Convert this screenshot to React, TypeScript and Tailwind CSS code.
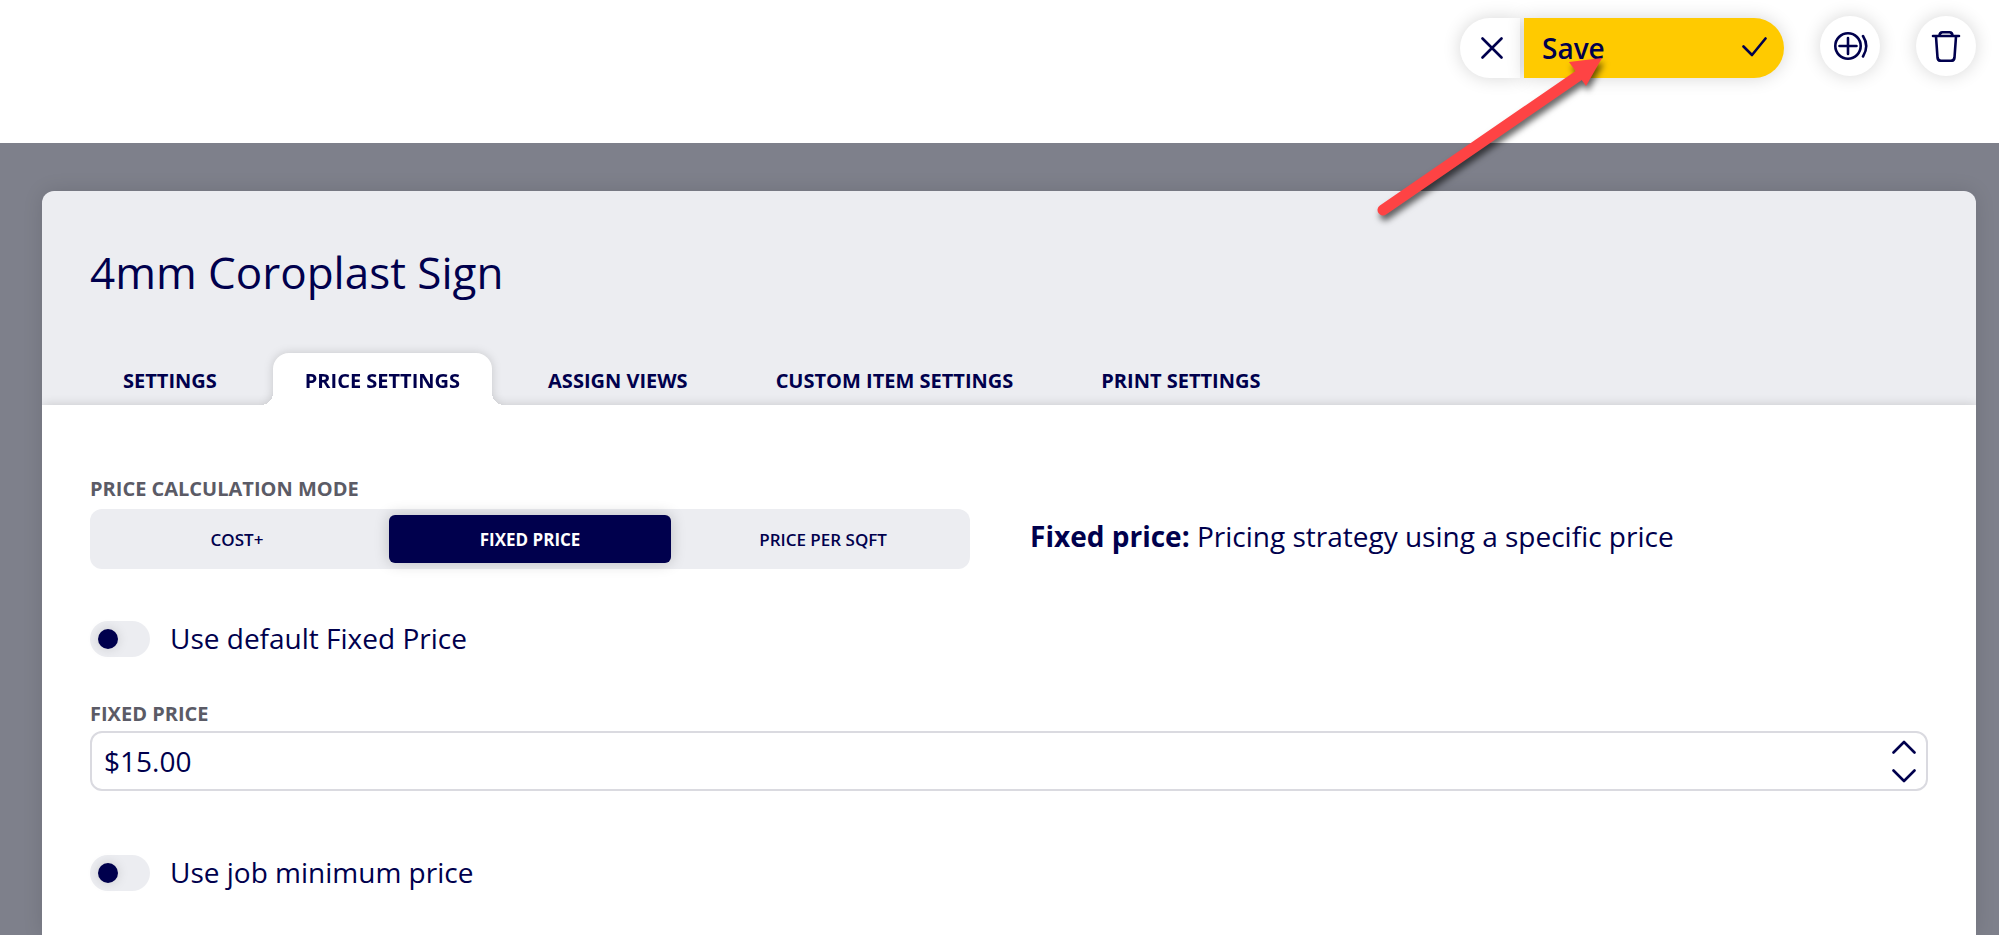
import { useState } from "react";

const tabs = ["Settings", "Price Settings", "Assign Views", "Custom Item Settings", "Print Settings"];
const modes = ["Cost+", "Fixed Price", "Price per sqft"];

function Toggle({ id, label }: { id: string; label: string }) {
    return (
        <div className="flex items-center gap-5">
            <input
                id={id}
                type="checkbox"
                className="h-9 w-[60px] shrink-0 appearance-none rounded-full bg-[#ecedf1] p-2 before:block before:size-5 before:rounded-full before:bg-[#00004d] before:shadow-[0_0_12px_rgba(0,0,0,0.15)] checked:before:ml-6"
            />
            <label htmlFor={id} className="pb-[2px] text-[28px] leading-[34px]">{label}</label>
        </div>
    );
}

function Arrow() {
    return (
        <svg
            className="pointer-events-none absolute top-[40px] right-[379px] z-20 drop-shadow-[2px_5px_3px_rgba(0,0,0,0.6)]"
            width="260"
            height="190"
            viewBox="0 0 260 190"
            aria-hidden="true"
        >
            <path d="M23 170 L218 36" stroke="#fe4344" strokeWidth="11" strokeLinecap="round" />
            <path d="M242 18 L209 22 L226 46 Z" fill="#fe4344" />
        </svg>
    );
}

function Header() {
    return (
        <header className="relative flex h-[143px] items-start justify-end pt-4 pr-[23px]">
            <div className="mt-[2px] flex gap-1">
                <button
                    aria-label="Cancel"
                    className="flex size-[60px] items-center justify-center rounded-l-full rounded-r-[3px] bg-white pl-1 shadow-[0_0_18px_rgba(0,0,0,0.16)]"
                >
                    <svg width="22" height="22" viewBox="0 0 22 22" fill="none" stroke="currentColor" strokeWidth="2.6" strokeLinecap="round">
                        <path d="M1.5 1.5 20.5 20.5M20.5 1.5 1.5 20.5" />
                    </svg>
                </button>
                <button className="flex h-[60px] w-[260px] items-center justify-between rounded-r-full bg-[#ffca00] pr-[17px] pl-[18px] text-[28px] font-semibold shadow-[0_0_18px_rgba(0,0,0,0.16)]">
                    Save
                    <svg width="25" height="30" viewBox="0 0 25 30" fill="none" stroke="currentColor" strokeWidth="2.6" strokeLinecap="round" strokeLinejoin="round">
                        <path d="M1.5 13.5 10 22 23.5 5.5" />
                    </svg>
                </button>
            </div>
            <button
                aria-label="Duplicate"
                className="ml-9 flex size-[60px] items-center justify-center rounded-full bg-white shadow-[0_0_18px_rgba(0,0,0,0.16)]"
            >
                <svg width="36" height="32" viewBox="0 0 36 32" fill="none" stroke="currentColor" strokeWidth="2.6" strokeLinecap="round">
                    <circle cx="16" cy="16" r="12.7" />
                    <path d="M16 8v16M7.5 16h17M31 6Q37.5 16 31 26.5" />
                </svg>
            </button>
            <button
                aria-label="Delete"
                className="ml-9 flex size-[60px] items-center justify-center rounded-full bg-white shadow-[0_0_18px_rgba(0,0,0,0.16)]"
            >
                <svg width="32" height="32" viewBox="0 0 32 32" fill="none" stroke="currentColor" strokeWidth="2.6" strokeLinecap="round" strokeLinejoin="round">
                    <path d="M3 6h26M9.5 6C9.5 3.5 10.5 2.2 12.5 2.2h7c2 0 3 1.3 3 3.8M6 6.5l1.5 21c.2 2 1.5 3.3 3.5 3.3h10c2 0 3.3-1.3 3.5-3.3L26 6.5" />
                </svg>
            </button>
            <Arrow />
        </header>
    );
}

export default function App() {
    const [tab, setTab] = useState("Price Settings");
    const [mode, setMode] = useState("Fixed Price");
    const [price, setPrice] = useState("$15.00");

    return (
        <div className="flex h-screen flex-col overflow-hidden bg-white font-['Open_Sans',sans-serif] text-[#00004d]">
            <Header />
            <main className="flex min-h-0 flex-1 flex-col bg-[#7e808b] pt-12 pr-[23px] pl-[42px]">
                <section className="flex flex-1 flex-col rounded-t-xl bg-[#ecedf1] shadow-[0_0_20px_rgba(0,0,0,0.12)]">
                    <h1 className="px-12 pt-12 text-[44px] leading-[66px]">4mm Coroplast Sign</h1>
                    <div role="tablist" className="mt-12 flex gap-6 px-[49px]">
                        {tabs.map((name) => (
                            <button
                                key={name}
                                role="tab"
                                aria-selected={name === tab}
                                onClick={() => setTab(name)}
                                className={
                                    name === tab
                                        ? "relative z-10 h-[52px] rounded-t-2xl bg-white px-8 pt-1 text-[20px] font-bold uppercase drop-shadow-[0_0_5px_rgba(0,0,0,0.16)] [clip-path:inset(-20px_-20px_0_-20px)] before:absolute before:bottom-0 before:-left-3 before:size-3 before:bg-[radial-gradient(circle_at_0_0,transparent_12px,white_12px)] after:absolute after:-right-3 after:bottom-0 after:size-3 after:bg-[radial-gradient(circle_at_100%_0,transparent_12px,white_12px)]"
                                        : "h-[52px] px-8 pt-1 text-[20px] font-bold uppercase"
                                }
                            >
                                {name}
                            </button>
                        ))}
                    </div>
                    <div className="flex-1 bg-white px-12 pt-[72px] shadow-[0_0_10px_rgba(0,0,0,0.16)] [clip-path:inset(-20px_0_0_0)]">
                        <div id="mode-label" className="text-[20px] leading-6 font-bold text-[#5b5b66] uppercase">
                            Price calculation mode
                        </div>
                        <div className="mt-2 grid grid-cols-[49.5fr_50.5fr] items-center gap-[60px]">
                            <div role="group" aria-labelledby="mode-label" className="grid h-[60px] grid-cols-3 gap-[11px] rounded-xl bg-[#ecedf1] p-[6px]">
                                {modes.map((name) => (
                                    <button
                                        key={name}
                                        aria-pressed={name === mode}
                                        onClick={() => setMode(name)}
                                        className={
                                            name === mode
                                                ? "rounded-md bg-[#00004d] pt-[2px] text-[17px] font-bold text-white uppercase shadow-[0_0_15px_rgba(0,0,0,0.2)]"
                                                : "rounded-md pt-[2px] text-[17px] font-semibold uppercase"
                                        }
                                    >
                                        {name}
                                    </button>
                                ))}
                            </div>
                            <p className="pb-[6px] text-[28px] leading-[34px]">
                                <strong className="font-bold">Fixed price:</strong> Pricing strategy using a specific price
                            </p>
                        </div>
                        <div className="mt-[52px]">
                            <Toggle id="default-price" label="Use default Fixed Price" />
                        </div>
                        <label htmlFor="fixed-price" className="mt-[45px] block text-[20px] leading-6 font-bold text-[#5b5b66] uppercase">
                            Fixed price
                        </label>
                        <div className="mt-[5px] flex h-[60px] items-center rounded-xl border-2 border-[#dadae0] pr-[10px] pl-3">
                            <input
                                id="fixed-price"
                                type="text"
                                value={price}
                                onChange={(e) => setPrice(e.target.value)}
                                className="min-w-0 flex-1 bg-transparent text-[28px] leading-9 outline-none"
                            />
                            <div className="flex flex-col gap-[13px]">
                                <button aria-label="Increase">
                                    <svg width="24" height="15" viewBox="0 0 24 15" fill="none" stroke="currentColor" strokeWidth="2.6" strokeLinecap="round" strokeLinejoin="round">
                                        <path d="M1.5 12.5 12 2 22.5 12.5" />
                                    </svg>
                                </button>
                                <button aria-label="Decrease">
                                    <svg width="24" height="15" viewBox="0 0 24 15" fill="none" stroke="currentColor" strokeWidth="2.6" strokeLinecap="round" strokeLinejoin="round">
                                        <path d="M1.5 2.5 12 13 22.5 2.5" />
                                    </svg>
                                </button>
                            </div>
                        </div>
                        <div className="mt-16">
                            <Toggle id="job-minimum" label="Use job minimum price" />
                        </div>
                    </div>
                </section>
            </main>
        </div>
    );
}
